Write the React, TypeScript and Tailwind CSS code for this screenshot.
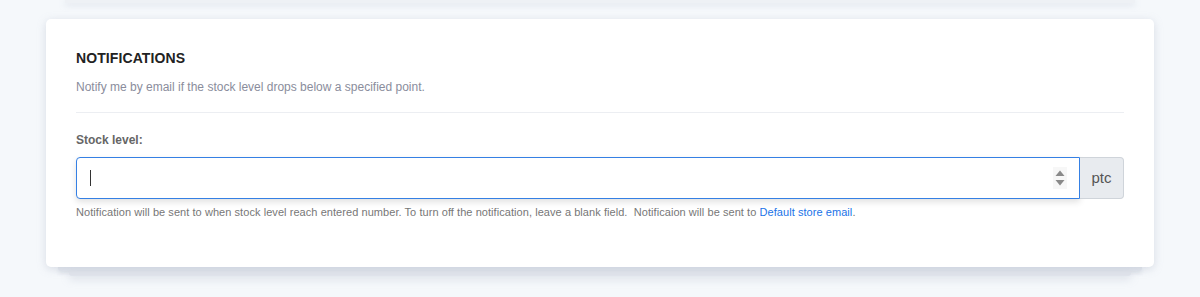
import React from "react";

const StockInput = () => {
  return (
    <div className="flex items-stretch h-[42px]">
      <div className="flex-1 flex items-center justify-between pl-[13px] pr-[12px] bg-white border border-[#3580e4] rounded-l-[4px] shadow-[0_3px_6px_rgba(0,0,0,0.12)]">
        <span className="block w-px h-[16px] bg-[#333]" />
        <div className="flex flex-col items-center gap-[4px] bg-[#f7f7f7] px-[2px] py-[3px]">
          <svg width="10" height="6" viewBox="0 0 10 6">
            <path d="M5 0.5 L9.5 6 L0.5 6 Z" fill="#8a8a8a" />
          </svg>
          <svg width="10" height="6" viewBox="0 0 10 6">
            <path d="M0.5 0 L9.5 0 L5 5.5 Z" fill="#8a8a8a" />
          </svg>
        </div>
      </div>
      <div className="w-[44px] flex items-center justify-center bg-[#e8ebef] border border-l-0 border-[#cfd4da] rounded-r-[4px] text-[15px] text-[#555]">
        ptc
      </div>
    </div>
  );
};

export default function App() {
  return (
    <div className="min-h-[297px] bg-[#f5f8fb] font-['Liberation_Sans',Arial,sans-serif] px-[46px] overflow-hidden">
      {/* bottom of previous card */}
      <div className="mx-[19px] h-[3px] bg-[#eef1f5] shadow-[0_2px_6px_rgba(170,180,200,0.35)]" />

      <div className="mt-[16px] relative">
        <div className="relative z-10 bg-white rounded-[5px] shadow-[0_2px_8px_rgba(160,170,190,0.35)] px-[30px] pt-[29px] pb-[47px]">
          <h2 className="text-[14px] leading-[20px] font-bold text-[#222] tracking-[0.1px]">
            NOTIFICATIONS
          </h2>
          <p className="mt-[11px] text-[12px] leading-[16px] text-[#8a8d9c]">
            Notify me by email if the stock level drops below a specified point.
          </p>
          <div className="mt-[17px] border-t border-[#eceef2]" />
          <label className="block mt-[19px] text-[12px] leading-[16px] font-bold text-[#666]">
            Stock level:
          </label>
          <div className="mt-[9px]">
            <StockInput />
          </div>
          <p className="mt-[6px] text-[11px] leading-[15px] text-[#777] tracking-[0.06px]">
            Notification will be sent to when stock level reach entered number. To turn off the
            notification, leave a blank field.&nbsp; Notificaion will be sent to{" "}
            <a href="#" className="text-[#1a73e8]">
              Default store email
            </a>
            .
          </p>
        </div>
        <div className="mx-[12px] h-[4px] bg-[#e4e8ee] rounded-b-[3px] shadow-[0_2px_4px_rgba(160,170,190,0.3)]" />
        <div className="mx-[23px] h-[5px] bg-[#e1e5ec] rounded-b-[3px] shadow-[0_3px_8px_rgba(160,170,190,0.35)]" />
      </div>
    </div>
  );
}
